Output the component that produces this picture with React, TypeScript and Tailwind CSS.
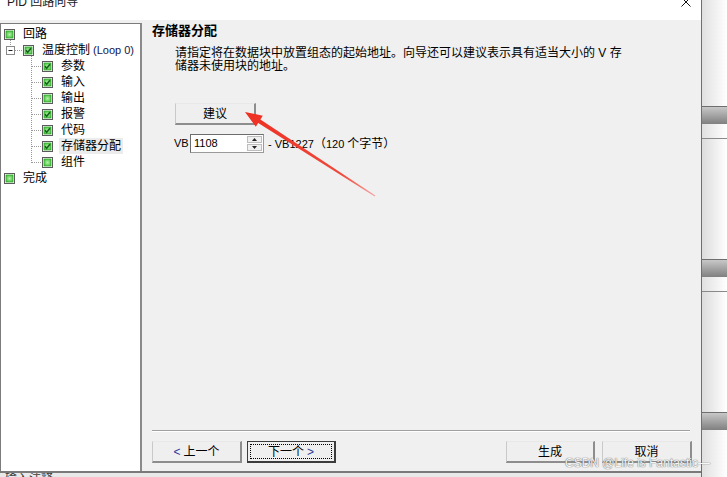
import React from 'react';

type TreeItem = {
  label: string;
  extra?: string;
  level: 0 | 1 | 2;
  checked: boolean;
  selected?: boolean;
};

const treeItems: TreeItem[] = [
  { label: '回路', level: 0, checked: false },
  { label: '温度控制', extra: '(Loop 0)', level: 1, checked: true },
  { label: '参数', level: 2, checked: true },
  { label: '输入', level: 2, checked: true },
  { label: '输出', level: 2, checked: false },
  { label: '报警', level: 2, checked: true },
  { label: '代码', level: 2, checked: true },
  { label: '存储器分配', level: 2, checked: true, selected: true },
  { label: '组件', level: 2, checked: false },
  { label: '完成', level: 0, checked: false },
];

const indent = ['pl-[3px]', 'pl-[22px]', 'pl-[41px]'];

const GreenBox = ({ checked }: { checked: boolean }) => (
  <svg width="11" height="11" viewBox="0 0 11 11" className="shrink-0">
    <defs>
      <radialGradient id="gb" cx="50%" cy="50%" r="60%">
        <stop offset="0%" stopColor="#b6f0a8" />
        <stop offset="100%" stopColor="#3fbf3a" />
      </radialGradient>
    </defs>
    <rect x="0.5" y="0.5" width="10" height="10" fill="#fff" stroke="#5b5b5b" />
    <rect x="2" y="2" width="7" height="7" fill="url(#gb)" stroke="#35a82f" strokeWidth="0.8" />
    {checked && <polyline points="3,5.2 4.7,7.2 8,3.3" fill="none" stroke="#13631a" strokeWidth="1.6" />}
  </svg>
);

const TreeLines = () => {
  const childRows = [2, 3, 4, 5, 6, 7, 8];
  return (
    <svg className="absolute left-0 top-0 pointer-events-none" width="140" height="200">
      <g stroke="#9a9a9a" strokeDasharray="1 1" fill="none">
        <line x1="9.5" y1="16" x2="9.5" y2="22" />
        <line x1="14" y1="26.5" x2="21" y2="26.5" />
        <line x1="30.5" y1="32" x2="30.5" y2="139" />
        {childRows.map((k) => (
          <line key={k} x1="31" y1={10.5 + 16 * k} x2="40" y2={10.5 + 16 * k} />
        ))}
      </g>
      <rect x="5.5" y="22.5" width="8" height="8" fill="#fff" stroke="#8a8a8a" />
      <line x1="7.5" y1="26.5" x2="11.5" y2="26.5" stroke="#202020" />
    </svg>
  );
};

const WinButton = ({ children, isDefault = false, width }: { children: React.ReactNode; isDefault?: boolean; width: string }) =>
  isDefault ? (
    <div className={`${width} h-[22px] border border-[#3c3c3c] border-r-2 border-b-2 bg-[#efefef] p-[2px]`}>
      <div className="h-full border border-dotted border-black flex items-center justify-center text-[12px] leading-none">
        {children}
      </div>
    </div>
  ) : (
    <div
      className={`${width} h-[22px] border border-t-[#e8e8e8] border-l-[#c9c9c9] border-r-2 border-b-2 border-r-[#8d8d8d] border-b-[#8d8d8d] bg-[#efefef] flex items-center justify-center text-[12px] leading-none`}
    >
      {children}
    </div>
  );

const PidWizard = () => {
  return (
    <div className="relative w-[727px] h-[477px] overflow-hidden flex bg-white text-black font-['Liberation_Sans','Noto_Sans_CJK_SC',sans-serif]">
      {/* Dialog window */}
      <div className="w-[702px] h-full flex flex-col border-r border-[#6f6f6f] shrink-0">
        {/* Title bar */}
        <div className="h-[20px] bg-white flex items-start overflow-hidden relative">
          <div className="pl-[7px] -mt-[6px] text-[12px] leading-[16px] text-[#1b1b1b]">PID 回路向导</div>
          <svg className="ml-auto mr-[10px] -mt-[3px]" width="10" height="10" viewBox="0 0 10 10">
            <path d="M0.5 0.5 L9.5 9.5 M9.5 0.5 L0.5 9.5" stroke="#111" strokeWidth="1" />
          </svg>
        </div>

        {/* Body */}
        <div className="h-[451px] bg-[#f0f0f0] flex">
          {/* Tree */}
          <div className="mt-[3px] w-[142px] bg-white border-l border-t border-[#7c7c7c] border-r-2 border-r-[#8a8a8a] relative pt-[2px]">
            <TreeLines />
            {treeItems.map((item) => (
              <div key={item.label} className={`h-[16px] flex items-center ${indent[item.level]}`}>
                <GreenBox checked={item.checked} />
                <div
                  className={`ml-[6px] px-[2px] h-[16px] flex items-center text-[12px] leading-none whitespace-nowrap ${
                    item.selected ? 'bg-[#ececec]' : ''
                  }`}
                >
                  {item.label}
                  {item.extra && <span className="ml-[3px] text-[11px] text-[#14144a]">{item.extra}</span>}
                </div>
              </div>
            ))}
          </div>

          {/* Content */}
          <div className="flex-1 flex flex-col pl-[10px] pr-[9px] pb-[8px]">
            <div className="mt-[3px] text-[13px] font-bold leading-[16px]">存储器分配</div>
            <div className="mt-[8px] ml-[23px] text-[12px] leading-[13px]">
              请指定将在数据块中放置组态的起始地址。向导还可以建议表示具有适当大小的 V 存
              <br />
              储器未使用块的地址。
            </div>

            <div className="mt-[30px] ml-[23px]">
              <WinButton width="w-[81px]">建议</WinButton>
            </div>

            <div className="mt-[9px] ml-[22px] flex items-center">
              <span className="w-[16px] text-[11px]">VB</span>
              <div className="w-[74px] h-[19px] bg-white border border-[#9a9a9a] border-t-[#6d6d6d] border-l-[#6d6d6d] flex">
                <div className="flex-1 pl-[3px] text-[11px] leading-[17px]">1108</div>
                <div className="w-[15px] my-[1px] mr-[1px] flex flex-col gap-[1px]">
                  <div className="flex-1 bg-[#f0f0f0] border border-[#bdbdbd] flex items-center justify-center">
                    <svg width="5" height="3" viewBox="0 0 5 3"><path d="M2.5 0 L5 3 L0 3 Z" fill="#222" /></svg>
                  </div>
                  <div className="flex-1 bg-[#f0f0f0] border border-[#bdbdbd] flex items-center justify-center">
                    <svg width="5" height="3" viewBox="0 0 5 3"><path d="M0 0 L5 0 L2.5 3 Z" fill="#222" /></svg>
                  </div>
                </div>
              </div>
              <span className="ml-[4px] text-[11px] whitespace-nowrap">
                - VB1227<span className="text-[12px]">（</span>120 <span className="text-[12px]">个字节）</span>
              </span>
            </div>

            <div className="flex-1" />

            <div className="mr-[2px] h-[2px] border-t border-[#a0a0a0] border-b border-b-white" />

            <div className="mt-[9px] flex">
              <WinButton width="w-[90px]">
                <span className="text-[#2b3a9a] mr-[3px]">&lt;</span>上一个
              </WinButton>
              <div className="ml-[5px]">
                <WinButton width="w-[89px]" isDefault>
                  下一个<span className="text-[#2b3a9a] ml-[3px]">&gt;</span>
                </WinButton>
              </div>
              <div className="ml-auto">
                <WinButton width="w-[89px]">生成</WinButton>
              </div>
              <div className="ml-[7px]">
                <WinButton width="w-[90px]">取消</WinButton>
              </div>
            </div>
          </div>
        </div>

        {/* Window bottom edge and the strip below */}
        <div className="h-[2px] bg-[#7a7a7a]" />
        <div className="h-[4px] bg-[#e9e9e9] overflow-hidden pl-[5px]">
          <div className="text-[12px] leading-[12px] text-[#3a3a3a]">输入注释</div>
        </div>
      </div>

      {/* Background to the right of the dialog */}
      <div className="flex-1 flex flex-col">
        <div className="h-[106px] bg-linear-to-r from-[#e0e0e0] to-white" />
        <div className="h-[18px] border-t border-[#6e6e6e] bg-linear-to-b from-[#c8c8c8] to-[#808080]" />
        <div className="h-[14px] bg-linear-to-r from-[#e0e0e0] to-white" />
        <div className="h-[121px] border-t border-[#8a8a8a] bg-linear-to-r from-[#dcdcdc] to-white" />
        <div className="h-[18px] border-t border-[#6e6e6e] bg-linear-to-b from-[#c8c8c8] to-[#808080]" />
        <div className="h-[14px] bg-linear-to-r from-[#e0e0e0] to-white" />
        <div className="h-[121px] border-t border-[#8a8a8a] bg-linear-to-r from-[#dcdcdc] to-white" />
        <div className="h-[18px] border-t border-[#6e6e6e] bg-linear-to-b from-[#c8c8c8] to-[#808080]" />
        <div className="flex-1 bg-linear-to-r from-[#e0e0e0] to-white" />
      </div>

      {/* Red annotation arrow */}
      <svg className="absolute left-0 top-0 pointer-events-none" width="727" height="477">
        <defs>
          <linearGradient id="arrowFade" x1="375" y1="196" x2="245" y2="112" gradientUnits="userSpaceOnUse">
            <stop offset="0%" stopColor="#f6a3a0" />
            <stop offset="25%" stopColor="#ef4a3c" />
            <stop offset="100%" stopColor="#ee2f22" />
          </linearGradient>
        </defs>
        <polygon
          points="245,112 262.8,115.7 260.4,119.5 375.3,195.6 374.7,196.4 258.2,122.9 255.8,126.7"
          fill="url(#arrowFade)"
        />
      </svg>

      {/* Watermark */}
      <div className="absolute left-[565px] top-[456px] text-[12px] leading-[14px] whitespace-nowrap text-[#f6f6f6] [text-shadow:0_0_1px_#6f6f6f,0_0_1px_#6f6f6f]">
        CSDN @Life is Fantastic—
      </div>
    </div>
  );
};

export default PidWizard;
